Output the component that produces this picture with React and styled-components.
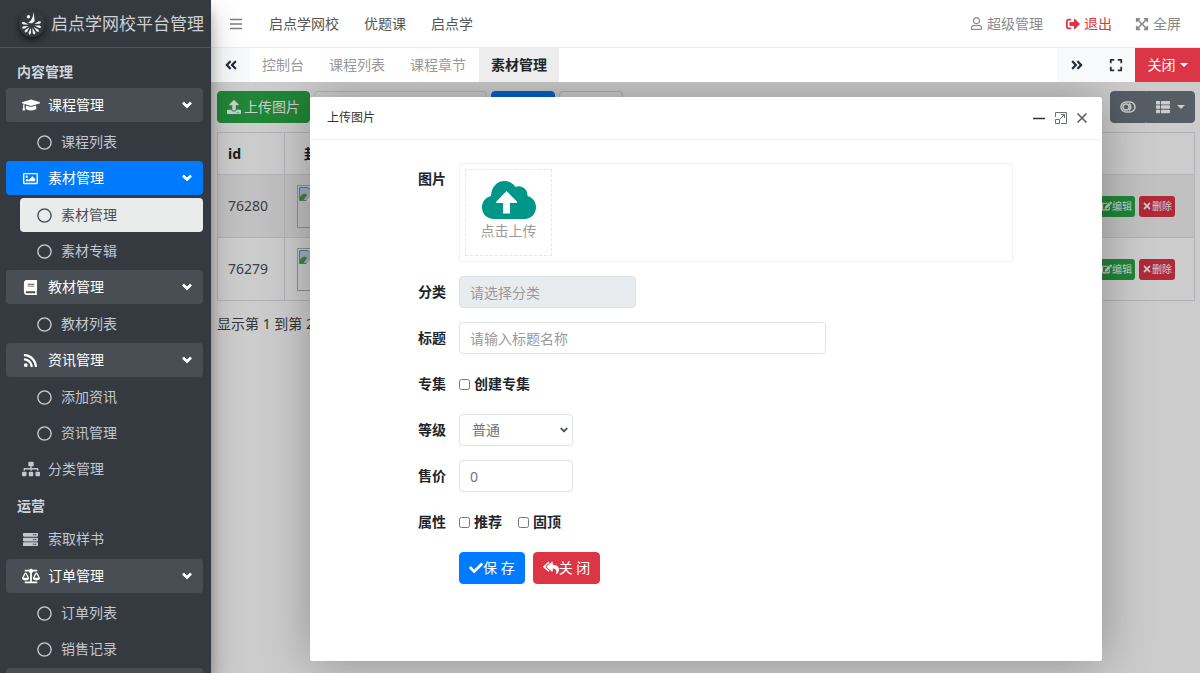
import { useState } from "react"
import styled, { createGlobalStyle, css } from "styled-components"
import {
	FaAngleDoubleLeft, FaAngleDoubleRight, FaAngleDown, FaBalanceScale, FaBook,
	FaCheck, FaEdit, FaExpand, FaExpandArrowsAlt, FaGraduationCap,
	FaRegCircle, FaRegImage, FaRegUser, FaReplyAll, FaRss, FaSearch, FaServer,
	FaSignOutAlt, FaSitemap, FaThList, FaTimes, FaUndo, FaUpload,
} from "react-icons/fa"

const menu = [
	{ header: "内容管理" },
	{ label: "课程管理", icon: FaGraduationCap, wide: true, children: ["课程列表"] },
	{ label: "素材管理", icon: FaRegImage, active: true, children: ["素材管理", "素材专辑"] },
	{ label: "教材管理", icon: FaBook, children: ["教材列表"] },
	{ label: "资讯管理", icon: FaRss, children: ["添加资讯", "资讯管理"] },
	{ label: "分类管理", icon: FaSitemap, wide: true },
	{ header: "运营" },
	{ label: "索取样书", icon: FaServer },
	{ label: "订单管理", icon: FaBalanceScale, wide: true, children: ["订单列表", "销售记录"] },
	{ label: "", icon: FaBook, children: [] },
]

const tabs = ["控制台", "课程列表", "课程章节", "素材管理"]
const rows = [76280, 76279]

const Logo = () => (
	<LogoBadge viewBox="0 0 26 26" aria-hidden="true">
		<g fill="#f1f3f4">
			<path d="M14.800 1 15.600 10.500 13 12.200 9 12Q13.500 9.500 14.800 1Z" />
			<circle cx="9.500" cy="5.800" r="1.700" />
			{[72, 102, 132, 162, 192, 222, 252, 282].map(angle => (
				<path key={angle} transform={`rotate(${angle} 12.5 14)`}
					d="M12.500 11 11.200 6Q12.500 2 13.800 6Z" />
			))}
		</g>
	</LogoBadge>
)

const CloudUpload = () => (
	<svg width="54" height="38" viewBox="0 0 54 38" aria-hidden="true">
		<path fill="#009688" d="M12 38C5 38 0 33 0 26.500C0 20.500 3.500 16.500 9 15C9.500 6 15 0 22.500 0C27 0 31 2 33.500 6C39 3.500 46 7.500 45.500 15C50.500 16.500 54 20.500 54 26C54 33 49 38 42.500 38Z" />
		<path fill="#fff" d="M24.500 10 35 20.500Q35.500 22 34 22H28V32.500H21V22H15Q13.500 22 14.500 20.500Z" />
	</svg>
)

const ToggleIcon = () => (
	<svg width="16" height="12" viewBox="0 0 16 12" fill="none" stroke="currentColor" aria-hidden="true">
		<rect x="1" y="1" width="14" height="10" rx="5" strokeWidth="1.500" />
		<circle cx="6" cy="6" r="3" strokeWidth="1.500" />
		<path d="M9 2.500C11.500 4 11.500 8 9 9.500" strokeWidth="1.500" />
	</svg>
)

const MinimizeIcon = () => (
	<svg width="12" height="12" viewBox="0 0 12 12" stroke="#2d3035" aria-hidden="true">
		<path d="M0 6.500H12" strokeWidth="1.500" />
	</svg>
)

const MaximizeIcon = () => (
	<svg width="12" height="12" viewBox="0 0 12 12" fill="none" stroke="#6b6e72" aria-hidden="true">
		<path d="M.5 5V.5H11.500V11.500H6M.5 7.500H4.500V11.500H.5ZM5 7 9.500 2.500M6 2.500H9.500V6" />
	</svg>
)

const CloseIcon = () => (
	<svg width="10" height="10" viewBox="0 0 10 10" stroke="#55585c" aria-hidden="true">
		<path d="M.5.5 9.500 9.500M9.500.5.5 9.500" strokeWidth="1.500" />
	</svg>
)

const BarsIcon = () => (
	<svg width="12" height="12" viewBox="0 0 12 12" stroke="#808080" aria-hidden="true">
		<path d="M0 1.500H12M0 6H12M0 10.500H12" strokeWidth="1.300" />
	</svg>
)

const BrokenImage = () => (
	<Thumb role="img" aria-label="封面">
		<svg width="16" height="16" viewBox="0 0 16 16" aria-hidden="true">
			<path fill="#c6d9f5" stroke="#8a8d92" d="M1.500 1.500H10L14.500 6V14.500H1.500Z" />
			<path fill="#4aa546" d="M2 14V11Q6 5 9 9L5.500 14Z" />
			<path fill="#fff" d="M16 7 7 16H16Z" />
		</svg>
	</Thumb>
)

const Sidebar = () => (
	<Aside>
		<Brand href="#"><Logo />启点学网校平台管理</Brand>
		<Nav>
			{menu.map((item, i) => item.header ? <NavHeader key={i}>{item.header}</NavHeader> : (
				<div key={i}>
					<NavLink href="#" $open={!!item.children} $active={item.active}>
						<NavIcon $size={item.wide ? 18 : 15}><item.icon /></NavIcon>
						{item.label}
						{item.children && <Arrow />}
					</NavLink>
					{item.children && item.children.map(child => (
						<SubLink key={child} href="#" $active={item.active && child == item.label}>
							<FaRegCircle />{child}
						</SubLink>
					))}
				</div>
			))}
		</Nav>
	</Aside>
)

const UploadDialog = () => {
	const [title, setTitle] = useState("")
	const [price, setPrice] = useState("0")

	return (
		<Dialog role="dialog" aria-labelledby="dialog-title">
			<DialogHead>
				<DialogTitle id="dialog-title">上传图片</DialogTitle>
				<IconButton aria-label="最小化"><MinimizeIcon /></IconButton>
				<IconButton aria-label="最大化"><MaximizeIcon /></IconButton>
				<IconButton aria-label="关闭"><CloseIcon /></IconButton>
			</DialogHead>
			<Form onSubmit={e => e.preventDefault()}>
				<Field>
					<Label as="span">图片</Label>
					<PictureBox>
						<UploadButton type="button"><CloudUpload />点击上传</UploadButton>
					</PictureBox>
				</Field>
				<Field>
					<Label htmlFor="category">分类</Label>
					<Input id="category" $width="177px" placeholder="请选择分类" readOnly />
				</Field>
				<Field>
					<Label htmlFor="title">标题</Label>
					<Input id="title" $width="367px" placeholder="请输入标题名称"
						value={title} onChange={e => setTitle(e.target.value)} />
				</Field>
				<Field>
					<Label as="span">专集</Label>
					<Check><input type="checkbox" />创建专集</Check>
				</Field>
				<Field>
					<Label htmlFor="level">等级</Label>
					<SelectWrap>
						<Select id="level"><option>普通</option></Select>
						<FaAngleDown />
					</SelectWrap>
				</Field>
				<Field>
					<Label htmlFor="price">售价</Label>
					<Input id="price" $width="114px"
						value={price} onChange={e => setPrice(e.target.value)} />
				</Field>
				<Field>
					<Label as="span">属性</Label>
					<Check><input type="checkbox" />推荐</Check>
					<Check><input type="checkbox" />固顶</Check>
				</Field>
				<Actions>
					<Button type="submit" $color="#007bff"><FaCheck />保 存</Button>
					<Button type="button" $color="#dc3545"><FaReplyAll size={16} />关 闭</Button>
				</Actions>
			</Form>
		</Dialog>
	)
}

const App = () => (
	<Layout>
		<GlobalStyle />
		<Sidebar />
		<Main>
			<TopBar>
				<MenuToggle aria-label="菜单"><BarsIcon /></MenuToggle>
				<TopLink href="#">启点学网校</TopLink>
				<TopLink href="#">优题课</TopLink>
				<TopLink href="#">启点学</TopLink>
				<UserLinks>
					<UserLink href="#"><FaRegUser size={13} />超级管理</UserLink>
					<UserLink href="#" $danger><FaSignOutAlt />退出</UserLink>
					<UserLink href="#"><FaExpandArrowsAlt />全屏</UserLink>
				</UserLinks>
			</TopBar>
			<TabBar>
				<TabTool aria-label="向左"><FaAngleDoubleLeft /></TabTool>
				<Tabs>
					{tabs.map(tab => (
						<Tab key={tab} href="#" $active={tab == "素材管理"}>{tab}</Tab>
					))}
				</Tabs>
				<TabTool aria-label="向右"><FaAngleDoubleRight /></TabTool>
				<TabTool aria-label="最大化"><FaExpand /></TabTool>
				<CloseTabs>关闭<Caret /></CloseTabs>
			</TabBar>
			<Content>
				<Toolbar>
					<Button $color="#28a745" $gap="3px"><FaUpload />上传图片</Button>
					<Input $width="173px" aria-label="搜索" />
					<Button $color="#007bff" $gap="2px"><FaSearch />搜索</Button>
					<Button $color="#fff" $gap="2px" $outline><FaUndo />清空</Button>
					<ButtonGroup>
						<Button $color="#6c757d" $gap="7px" aria-label="切换"><ToggleIcon /></Button>
						<Button $color="#6c757d" $gap="7px" aria-label="列"><FaThList /><Caret /></Button>
					</ButtonGroup>
				</Toolbar>
				<Table>
					<thead>
						<tr>
							<Th $width="67px">id</Th>
							<Th $width="67px" $center>封面</Th>
							<Th>标题</Th>
							<Th $width="150px"></Th>
						</tr>
					</thead>
					<tbody>
						{rows.map(id => (
							<Tr key={id}>
								<Td>{id}</Td>
								<Td><BrokenImage /></Td>
								<Td></Td>
								<Td>
									<RowActions>
										<SmallButton $color="#28a745"><FaEdit />编辑</SmallButton>
										<SmallButton $color="#dc3545"><FaTimes />删除</SmallButton>
									</RowActions>
								</Td>
							</Tr>
						))}
					</tbody>
				</Table>
				<Summary>显示第 1 到第 2 条记录</Summary>
				<Shade><UploadDialog /></Shade>
			</Content>
		</Main>
	</Layout>
)

const GlobalStyle = createGlobalStyle`
	*, *::before, *::after {
		box-sizing: border-box;
	}
	body {
		margin: 0;
		font-family: "Noto Sans", "Noto Sans CJK SC", sans-serif;
		font-size: 14px;
		line-height: 20px;
		color: #212529;
		background: #fff;
	}
	a {
		text-decoration: none;
	}
	button, input, select {
		font: inherit;
	}
	svg {
		flex-shrink: 0;
	}
`
const Layout = styled.div`
	display: flex;
	height: 100vh;
	overflow: hidden;
`
const Aside = styled.aside`
	flex: 0 0 211px;
	overflow: hidden;
	background: #343a40;
	box-shadow: 0 14px 28px rgba(0,0,0,0.25), 0 10px 10px rgba(0,0,0,0.22);
	z-index: 2;
`
const Brand = styled.a`
	display: flex;
	align-items: center;
	gap: 6px;
	height: 48px;
	padding-left: 19px;
	border-bottom: 1px solid #4b545c;
	font-size: 17px;
	white-space: nowrap;
	color: #ced0d3;
`
const LogoBadge = styled.svg`
	width: 26px;
	height: 26px;
	border-radius: 50%;
	box-shadow: 0 3px 6px rgba(0,0,0,0.3), 0 3px 6px rgba(0,0,0,0.3);
`
const Nav = styled.nav`
	padding: 7px 8px 0 6px;
`
const NavHeader = styled.div`
	height: 33px;
	padding: 7px 11px;
	font-weight: bold;
	color: #d0d4db;
`
const navItem = css`
	display: flex;
	align-items: center;
	height: 34px;
	border-radius: 4px;
	color: #c2c7d0;
`
const NavLink = styled.a`
	${navItem}
	gap: 8px;
	margin-bottom: 3px;
	padding: 0 9px 0 15px;
	${props => props.$open && css`
		background: rgba(255,255,255,0.1);
		color: #fff;
	`}
	${props => props.$active && css`
		background: #007bff;
	`}
`
const NavIcon = styled.span`
	display: flex;
	justify-content: center;
	width: 19px;
	font-size: ${props => props.$size}px;
`
const Arrow = styled(FaAngleDown)`
	margin-left: auto;
	font-size: 14px;
	stroke: currentColor;
	stroke-width: 30px;
`
const SubLink = styled.a`
	${navItem}
	gap: 9px;
	margin: 0 0 2px 14px;
	padding-left: 17px;
	svg {
		font-size: 15px;
	}
	${props => props.$active && css`
		background: #e9eceb;
		color: #495057;
	`}
`
const Main = styled.div`
	display: flex;
	flex: 1;
	flex-direction: column;
	min-width: 0;
`
const TopBar = styled.header`
	display: flex;
	align-items: center;
	gap: 25px;
	height: 48px;
	padding: 0 19px;
	border-bottom: 1px solid #e9ecef;
`
const MenuToggle = styled.button`
	display: flex;
	padding: 0 2px 0 0;
	border: 0;
	background: none;
`
const TopLink = styled.a`
	color: #555;
`
const UserLinks = styled.div`
	display: flex;
	gap: 23px;
	margin-left: auto;
`
const UserLink = styled.a`
	display: flex;
	align-items: center;
	gap: 4px;
	color: ${props => props.$danger ? "#dc3545" : "#8a8a8a"};
`
const TabBar = styled.div`
	display: flex;
	height: 34px;
	background: #fff;
`
const TabTool = styled.button`
	display: flex;
	align-items: center;
	justify-content: center;
	width: 39px;
	padding: 0;
	border: 0;
	background: #f8f9fa;
	color: #1f2d3d;
`
const Tabs = styled.nav`
	display: flex;
	flex: 1;
	gap: 1px;
`
const Tab = styled.a`
	padding: 7px 12px;
	color: #999;
	${props => props.$active && css`
		background: #ededed;
		color: #212529;
		font-weight: bold;
	`}
`
const CloseTabs = styled(TabTool)`
	gap: 4px;
	width: 65px;
	background: #dc3545;
	color: #fff;
`
const Caret = styled.span`
	border: 4px solid transparent;
	border-top-color: currentColor;
	border-bottom: 0;
`
const Content = styled.main`
	position: relative;
	flex: 1;
	overflow: hidden;
	padding: 9px 5px 9px 6px;
`
const Shade = styled.div`
	position: absolute;
	inset: 0;
	display: flex;
	padding: 15px 98px 12px 99px;
	background: rgba(0,0,0,0.2);
`
const Toolbar = styled.div`
	display: flex;
	gap: 4px;
`
const Button = styled.button`
	display: flex;
	align-items: center;
	gap: ${props => props.$gap || 0};
	height: 32px;
	padding: 0 9px;
	border: 1px solid ${props => props.$outline ? "#ddd" : props.$color};
	border-radius: 4px;
	background: ${props => props.$color};
	color: ${props => props.$outline ? "#444" : "#fff"};
	white-space: nowrap;
`
const ButtonGroup = styled.div`
	display: flex;
	margin-left: auto;
	button:first-child {
		border-radius: 4px 0 0 4px;
	}
	button:last-child {
		border-radius: 0 4px 4px 0;
	}
`
const Table = styled.table`
	width: 100%;
	margin-top: 9px;
	border-collapse: collapse;
	table-layout: fixed;
`
const cell = css`
	padding: 0 10px;
	border: 1px solid #dee2e6;
	text-align: left;
`
const Th = styled.th`
	${cell}
	width: ${props => props.$width || "auto"};
	height: 42px;
	text-align: ${props => props.$center ? "center" : "left"};
`
const Tr = styled.tr`
	height: 63px;
	&:nth-child(odd) {
		background: rgba(0,0,0,0.05);
	}
`
const Td = styled.td`
	${cell}
	color: #495057;
`
const Thumb = styled.div`
	width: 42px;
	height: 43px;
	margin-left: 2px;
	border: 1px solid #b0b3b6;
`
const RowActions = styled.div`
	display: flex;
	justify-content: flex-end;
	gap: 4px;
	padding-right: 9px;
`
const SmallButton = styled.button`
	display: flex;
	align-items: center;
	height: 21px;
	padding: 0 3px;
	border: 0;
	border-radius: 3px;
	background: ${props => props.$color};
	color: #fff;
	font-size: 10px;
`
const Summary = styled.p`
	margin: 13px 0;
	color: #444;
	white-space: nowrap;
`
const Dialog = styled.section`
	flex: 1;
	min-width: 0;
	border-radius: 2px;
	background: #fff;
	box-shadow: 1px 1px 50px rgba(0,0,0,0.3);
`
const DialogHead = styled.header`
	display: flex;
	align-items: center;
	gap: 10px;
	height: 43px;
	padding: 0 15px 0 17px;
	border-bottom: 1px solid #f0f0f0;
`
const DialogTitle = styled.h2`
	flex: 1;
	margin: 0;
	font-size: 12px;
	font-weight: normal;
	color: #333;
`
const IconButton = styled.button`
	display: flex;
	padding: 0;
	border: 0;
	background: none;
`
const Form = styled.form`
	display: flex;
	flex-direction: column;
	gap: 14px;
	padding: 23px 0;
`
const Field = styled.div`
	display: flex;
	min-height: 32px;
`
const Label = styled.label`
	width: 136px;
	margin-right: 13px;
	line-height: 32px;
	font-weight: bold;
	text-align: right;
`
const PictureBox = styled.div`
	width: 70%;
	padding: 5px;
	border: 1px solid #f2f2f2;
`
const UploadButton = styled.button`
	display: flex;
	flex-direction: column;
	align-items: center;
	gap: 2px;
	width: 87px;
	height: 87px;
	padding: 11px 0;
	border: 1px dashed #e6e6e6;
	background: #fff;
	color: #999;
`
const Input = styled.input`
	width: ${props => props.$width};
	height: 32px;
	padding: 0 10px;
	border: 1px solid #e0e3e6;
	border-radius: 4px;
	color: #6c757d;
	&:read-only {
		background: #e9ecef;
	}
	&::placeholder {
		color: #999;
	}
`
const Check = styled.label`
	display: flex;
	align-items: center;
	gap: 4px;
	margin-right: 16px;
	font-weight: bold;
	input {
		width: 11px;
		height: 11px;
		margin: 0;
	}
`
const SelectWrap = styled.div`
	display: grid;
	align-items: center;
	width: 114px;
	> * {
		grid-area: 1 / 1;
	}
	svg {
		justify-self: end;
		margin-right: 3px;
		font-size: 12px;
		color: #495057;
		pointer-events: none;
	}
`
const Select = styled.select`
	width: 100%;
	height: 32px;
	padding: 0 12px;
	border: 1px solid #e0e3e6;
	border-radius: 4px;
	background: #fff;
	color: #6c757d;
	appearance: none;
`
const Actions = styled.div`
	display: flex;
	gap: 8px;
	padding-left: 149px;
`

export default App
